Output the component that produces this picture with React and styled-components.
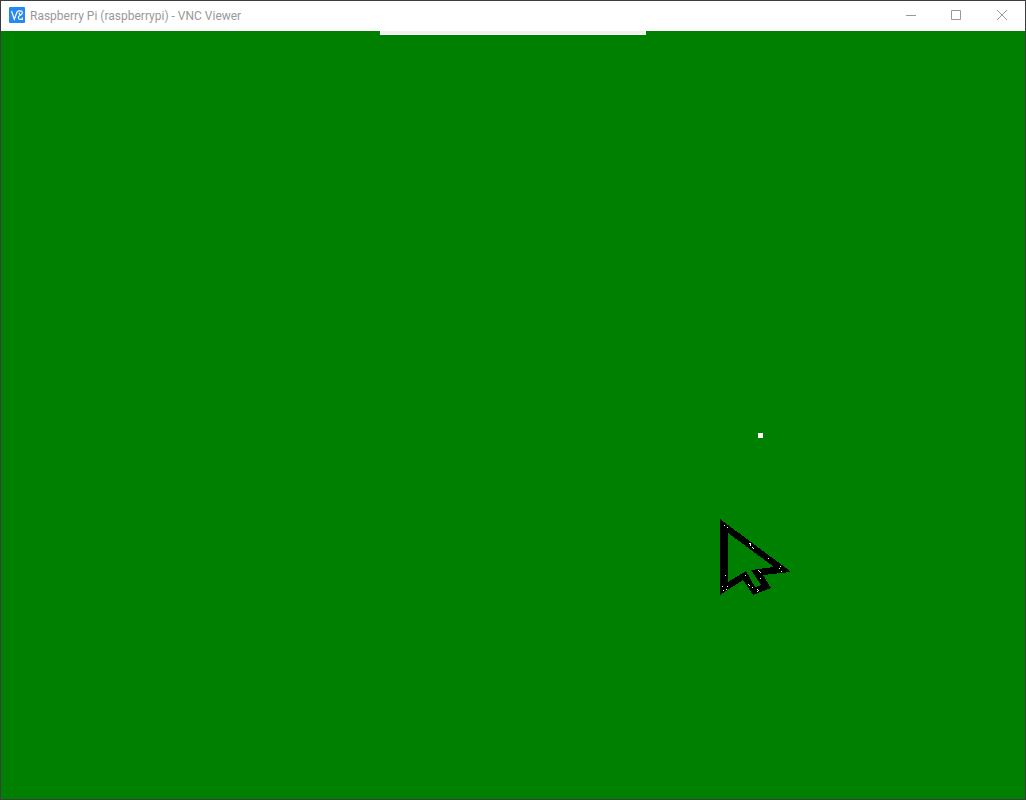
import React from "react";
import styled, { createGlobalStyle } from "styled-components";

const GlobalStyle = createGlobalStyle`
  *, *::before, *::after { box-sizing: border-box; }
  body { margin: 0; background: #008000; }
`;

const Window = styled.div`
  display: flex;
  flex-direction: column;
  min-height: 100vh;
  border: 1px solid #3e3c40;
  font-family: Roboto, "Noto Sans", sans-serif;
`;

const TitleBar = styled.header`
  display: flex;
  align-items: flex-start;
  height: 30px;
  padding-left: 8px;
  background: #ffffff;
`;

const AppIcon = styled.svg`
  flex: none;
  width: 16px;
  height: 16px;
  margin-top: 6px;
`;

const Title = styled.h1`
  flex: 1;
  margin: 0 0 0 5px;
  font-size: 12px;
  line-height: 30px;
  font-weight: 400;
  color: #999999;
  white-space: nowrap;
`;

const Controls = styled.div`
  display: flex;
`;

const ControlButton = styled.button`
  display: flex;
  align-items: center;
  justify-content: center;
  width: ${(p) => p.$width}px;
  height: 29px;
  padding: 0;
  border: 0;
  background: transparent;
  color: #999999;

  svg {
    width: 11px;
    height: 11px;
    fill: none;
    stroke: currentColor;
  }
`;

const RemoteScreen = styled.main`
  position: relative;
  flex: 1;
  background: #008000;
`;

const ToolbarHandle = styled.div`
  width: 266px;
  height: 4px;
  margin: 0 auto;
  background: #f0f0f0;
  border: 1px solid #ffffff;
  border-top: 0;
`;

const RemoteDot = styled.div`
  position: absolute;
  left: 757px;
  top: 402px;
  width: 5px;
  height: 5px;
  background: #ffffff;
`;

const Pointer = styled.svg`
  position: absolute;
  left: 719px;
  top: 488px;
  width: 71px;
  height: 77px;
`;

const sparks = [
  [4, 6], [7, 8], [29, 24], [30, 24], [30, 25], [30, 26], [32, 28], [33, 29],
  [5, 56], [2, 67], [7, 67], [6, 70], [3, 71], [25, 56], [28, 65], [29, 66],
  [32, 68], [48, 39], [60, 47], [59, 49], [61, 52], [38, 51], [39, 52],
  [40, 53], [40, 59], [37, 70], [38, 71], [37, 72],
];

export default function App() {
  return (
    <>
      <GlobalStyle />
      <Window>
        <TitleBar>
          <AppIcon viewBox="0 0 16 16" aria-hidden="true">
            <rect width="16" height="16" rx="1" fill="#2489f4" />
            <path
              d="M2.5 4L5.3 12.3L8 5Q8.5 3.8 10 3.8H11.4Q13.3 3.8 13.3 5.8Q13.3 7.4 11.4 8.2Q9.3 9 9.3 10.6Q9.3 12.4 11.2 12.4H13.3V10.6M10.2 5.6V6.4Q10.3 7.6 11.8 8.2"
              fill="none"
              stroke="#ffffff"
              strokeWidth="1.2"
            />
          </AppIcon>
          <Title>Raspberry Pi (raspberrypi) - VNC Viewer</Title>
          <Controls>
            <ControlButton $width={43} type="button" aria-label="Minimize">
              <svg viewBox="0 0 11 11"><path d="M0 5.5H10" /></svg>
            </ControlButton>
            <ControlButton $width={47} type="button" aria-label="Maximize">
              <svg viewBox="0 0 11 11"><path d="M.5 .5H9.5V9.5H.5Z" /></svg>
            </ControlButton>
            <ControlButton $width={45} type="button" aria-label="Close">
              <svg viewBox="0 0 11 11"><path d="M0 0L10 10M10 0L0 10" /></svg>
            </ControlButton>
          </Controls>
        </TitleBar>
        <RemoteScreen>
          <ToolbarHandle />
          <RemoteDot />
          <Pointer viewBox="0 0 71 77" shapeRendering="crispEdges" aria-hidden="true">
            <path
              fill="#000000"
              fillRule="evenodd"
              d="M0 0L70 52V53L43 56L51 69L33 76L23 61L0 76ZM8 14V63L26 52L35 68L41 66L31 51L54 48Z"
            />
            {sparks.map(([x, y]) => (
              <rect key={`${x}-${y}`} x={x} y={y} width="1" height="1" fill="#ffffff" />
            ))}
          </Pointer>
        </RemoteScreen>
      </Window>
    </>
  );
}
